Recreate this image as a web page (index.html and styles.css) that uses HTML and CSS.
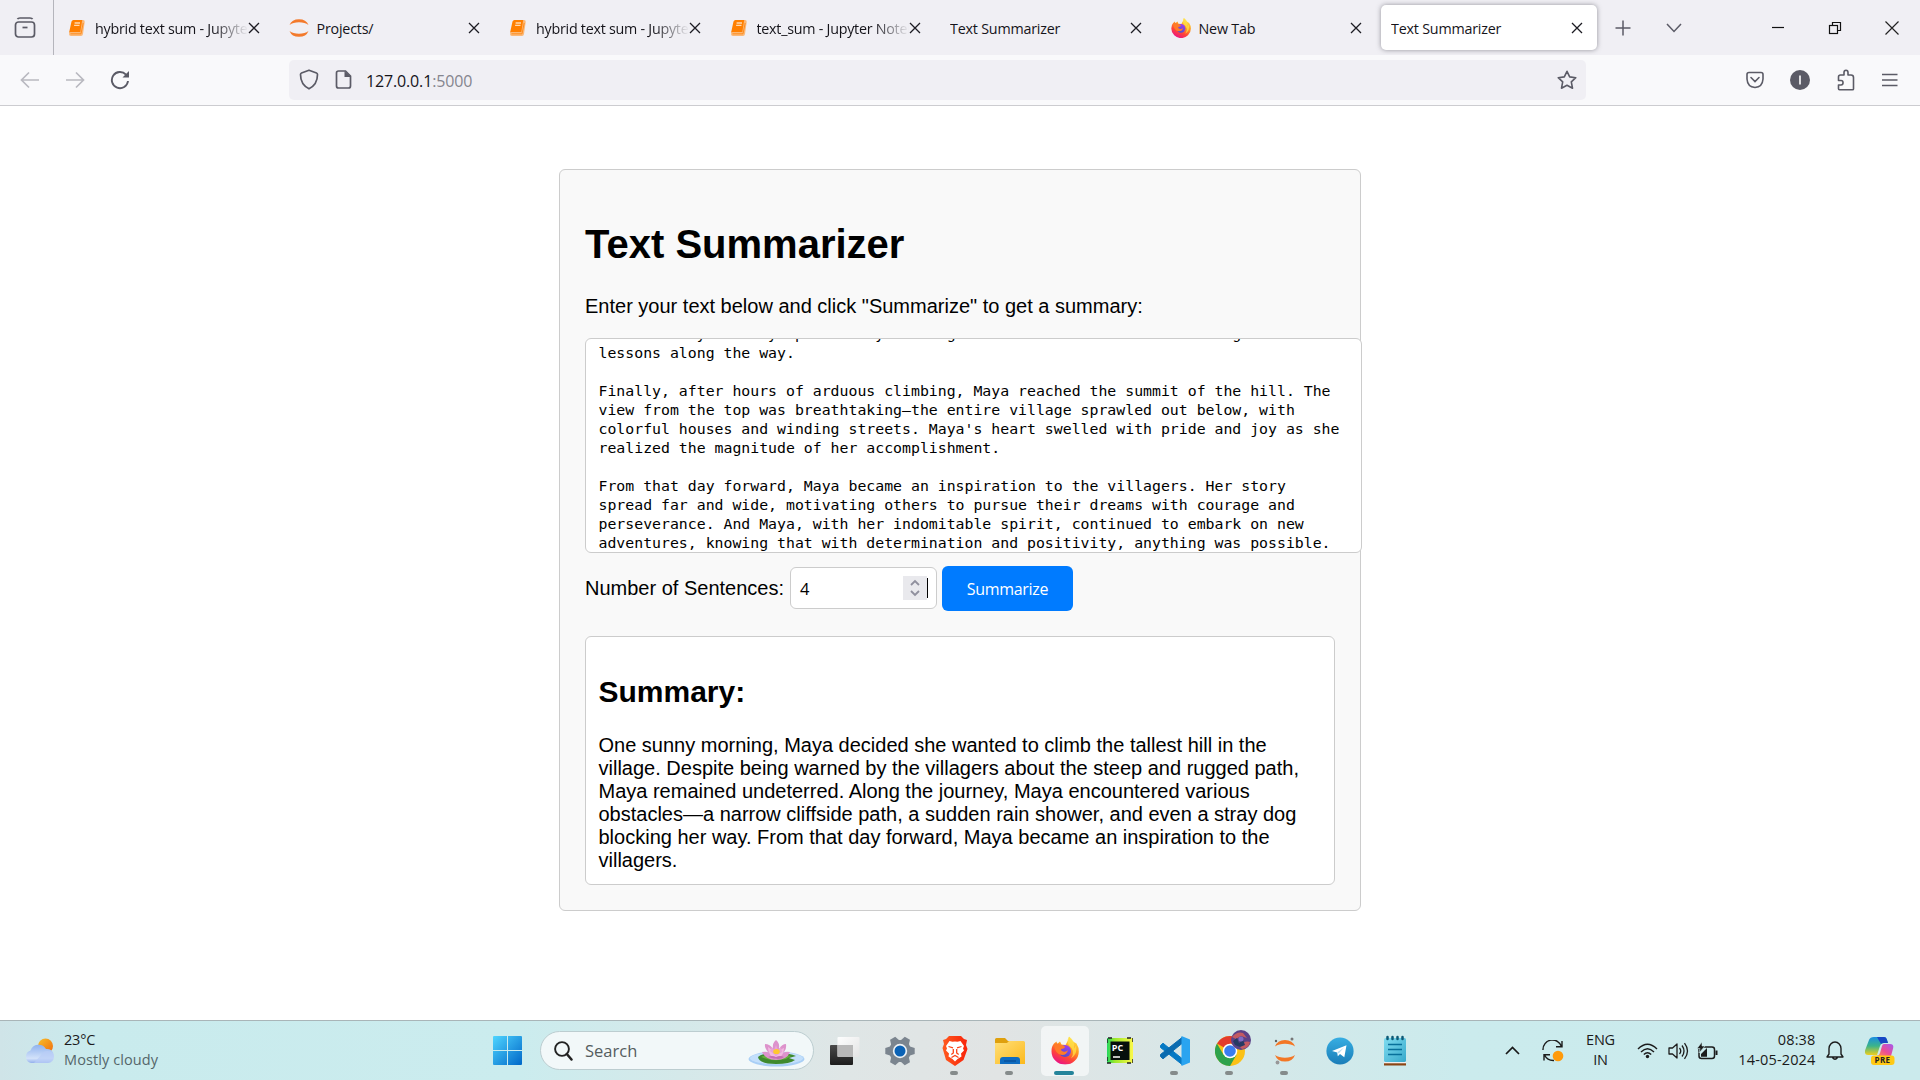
FILE: index.html
```html
<!DOCTYPE html>
<html lang="en">
<head>
<meta charset="utf-8">
<title>Text Summarizer</title>
<link rel="stylesheet" href="styles.css">
</head>
<body>
<svg class="defs" width="0" height="0">
  <defs>
    <linearGradient id="ffBody" x1=".8" y1="0" x2=".3" y2="1"><stop offset="0" stop-color="#fff14a"/><stop offset=".4" stop-color="#ff9a20"/><stop offset=".7" stop-color="#ff4438"/><stop offset="1" stop-color="#e8108a"/></linearGradient>
    <linearGradient id="ffGlobe" x1=".7" y1="0" x2=".3" y2="1"><stop offset="0" stop-color="#a03df0"/><stop offset="1" stop-color="#4b50c8"/></linearGradient>
    <linearGradient id="win" x1="0" y1="0" x2="1" y2="1"><stop offset="0" stop-color="#4fd5ff"/><stop offset="1" stop-color="#0067c8"/></linearGradient>
    <linearGradient id="cloud" x1="0" y1="0" x2="0" y2="1"><stop offset="0" stop-color="#8fb2ee"/><stop offset=".75" stop-color="#d3e2fa"/><stop offset="1" stop-color="#93b0ec"/></linearGradient>
    <linearGradient id="sun" x1="0" y1="0" x2="1" y2="1"><stop offset="0" stop-color="#f8c02a"/><stop offset="1" stop-color="#f0690e"/></linearGradient>
    <linearGradient id="brave" x1="0" y1="0" x2="1" y2="0"><stop offset="0" stop-color="#ff5a1f"/><stop offset="1" stop-color="#f8230a"/></linearGradient>
    <linearGradient id="folder" x1="0" y1="0" x2="1" y2="1"><stop offset="0" stop-color="#ffdf78"/><stop offset="1" stop-color="#fcb91c"/></linearGradient>
    <linearGradient id="pc" x1="0" y1="0" x2="1" y2="0"><stop offset="0" stop-color="#21d760"/><stop offset=".3" stop-color="#9be82c"/><stop offset="1" stop-color="#fcf84a"/></linearGradient>
    <linearGradient id="tg" x1="0" y1="0" x2="0" y2="1"><stop offset="0" stop-color="#37aee2"/><stop offset="1" stop-color="#1a7db8"/></linearGradient>
    <linearGradient id="note" x1="0" y1="0" x2="1" y2="1"><stop offset="0" stop-color="#7fdcf0"/><stop offset="1" stop-color="#37a9cb"/></linearGradient>
    <linearGradient id="copA" x1="0" y1="0" x2="0" y2="1"><stop offset="0" stop-color="#1a8ee0"/><stop offset=".5" stop-color="#3bb48a"/><stop offset="1" stop-color="#f0cf1c"/></linearGradient>
    <linearGradient id="copB" x1="1" y1="0" x2="0" y2="1"><stop offset="0" stop-color="#a45af0"/><stop offset=".55" stop-color="#ea4c96"/><stop offset="1" stop-color="#ff8a50"/></linearGradient>
    <linearGradient id="tvBack" x1="0" y1="0" x2="0" y2="1"><stop offset="0" stop-color="#4a4a4a"/><stop offset="1" stop-color="#1c1c1c"/></linearGradient>
    <linearGradient id="tvFront" x1="0" y1="0" x2="1" y2="1"><stop offset="0" stop-color="#fff"/><stop offset="1" stop-color="#e4e4e4"/></linearGradient>
    <symbol id="x" viewBox="0 0 12 12"><path d="M1 1l10 10M11 1L1 11" fill="none" stroke="#1c1b22" stroke-width="1.3"/></symbol>
    <symbol id="book" viewBox="0 0 18 18"><path d="M5.500 1H15q2 0 1.700 2L15 15q-.3 2-2 2H3q-2 0-2-2z" fill="#fbb877"/><path d="M5.500 1H14.200L12.300 13H2.500q-1 0-1.500 1L3.500 2.500Q4 1 5.500 1z" fill="#ff7f00"/><path d="M6.600 4h5.400M6.100 6.400h5.400" stroke="#ffd9b0" stroke-width="1.300"/><path d="M2.500 14.800h10.500L15.200 4" fill="none" stroke="#ff8d1e" stroke-width="1"/></symbol>
    <symbol id="jup" viewBox="0 0 20 20"><path d="M.5 7A10 8.500 0 0 1 19.500 7A12 7 0 0 0 .5 7zM.5 13A10 8.500 0 0 0 19.500 13A12 7 0 0 1 .5 13z" fill="#f37a2c"/></symbol>
    <symbol id="fox" viewBox="0 0 28 28"><path d="M3 7L5.500 5l.7 2.500L9 5l1.500 3 4 .5L17.500 3 18 0l4 5 3.500 2q2.500 4 2.300 8A13.500 13 0 0 1 .5 15Q.3 10 3 7z" fill="url(#ffBody)"/><circle cx="14" cy="14.500" r="6" fill="url(#ffGlobe)"/><path d="M3 8q3-2 7 .5l4 1.500q0 2-4 2.500 0 2 2 2.500 3 1 5-1.500-1 5-6 5Q4 18 3 8z" fill="#ff7a28"/><path d="M18 0q7 5 5 12l2-3q2 8-5 13 5-8-2-13-3-4 0-9z" fill="#ffe14a" opacity=".75"/></symbol>
  </defs>
</svg>

<div class="screen">
  <header class="tabbar">
    <div class="view"><svg width="22" height="22" viewBox="0 0 22 22" fill="none" stroke="#5b5b66" stroke-width="1.700"><path d="M3.500 2.200Q4 1 6 1h10q2 0 2.500 1.200"/><rect x="1.500" y="5" width="19" height="15" rx="3"/><path d="M8.500 10.500h5"/></svg></div>
    <div class="tabs">
      <div class="tab"><svg class="fav"><use href="#book"/></svg><span class="fade">hybrid text sum - Jupyter</span><svg class="tx"><use href="#x"/></svg></div>
      <div class="tab"><svg class="fav jp"><use href="#jup"/></svg><span>Projects/</span><svg class="tx"><use href="#x"/></svg></div>
      <div class="tab"><svg class="fav"><use href="#book"/></svg><span class="fade">hybrid text sum - Jupyter</span><svg class="tx"><use href="#x"/></svg></div>
      <div class="tab"><svg class="fav"><use href="#book"/></svg><span class="fade">text_sum - Jupyter Notebook</span><svg class="tx"><use href="#x"/></svg></div>
      <div class="tab"><span>Text Summarizer</span><svg class="tx"><use href="#x"/></svg></div>
      <div class="tab"><svg class="fav jp"><use href="#fox"/></svg><span>New Tab</span><svg class="tx"><use href="#x"/></svg></div>
      <div class="tab active"><span>Text Summarizer</span><svg class="tx"><use href="#x"/></svg></div>
    </div>
    <div class="newtab"><svg width="16" height="16" viewBox="0 0 16 16" stroke="#5b5b66" stroke-width="1.500"><path d="M8 .5v15M.5 8h15"/></svg></div>
    <div class="alltabs"><svg width="16" height="10" viewBox="0 0 16 10" fill="none" stroke="#5b5b66" stroke-width="1.500"><path d="M1 1l7 7.500L15 1"/></svg></div>
    <div class="wincell"><svg width="14" height="14" viewBox="0 0 14 14" stroke="#111" stroke-width="1.200"><path d="M1 6.500h12"/></svg></div>
    <div class="wincell"><svg width="14" height="14" viewBox="0 0 14 14" fill="none" stroke="#111" stroke-width="1.200"><rect x="1.500" y="4.500" width="8" height="8"/><path d="M4.500 4V1.500h8v8H10"/></svg></div>
    <div class="wincell"><svg width="14" height="14" viewBox="0 0 14 14" stroke="#222" stroke-width="1.200"><path d="M.5.5l13 13M13.500.5l-13 13"/></svg></div>
  </header>

  <nav class="toolbar">
    <div class="navcell"><svg width="20" height="18" viewBox="0 0 20 18" fill="none" stroke="#b9b9c0" stroke-width="1.700"><path d="M19 9H2M9 1.500L1.500 9 9 16.500"/></svg></div>
    <div class="navcell"><svg width="20" height="18" viewBox="0 0 20 18" fill="none" stroke="#b9b9c0" stroke-width="1.700"><path d="M1 9h17M11 1.500L18.500 9 11 16.500"/></svg></div>
    <div class="navcell"><svg width="20" height="20" viewBox="0 0 20 20"><path d="M16 4.700A8.100 8.100 0 1 0 18 11" fill="none" stroke="#5b5b66" stroke-width="1.900"/><path d="M19 1v6.500h-6.500z" fill="#5b5b66"/></svg></div>
    <div class="urlbar">
      <svg class="shield" width="20" height="21" viewBox="0 0 20 21" fill="none" stroke="#5b5b66" stroke-width="1.700" stroke-linejoin="round"><path d="M10 1.200L17.500 4q1 .4 1 1.500 0 10-8.500 14.300Q1.500 15.500 1.500 5.500q0-1.100 1-1.500z"/></svg>
      <svg class="page" width="17" height="19" viewBox="0 0 17 19"><path d="M3.500 1h7l5 5v10q0 2-2 2h-10q-2 0-2-2V3q0-2 2-2z" fill="none" stroke="#5b5b66" stroke-width="1.700"/><path d="M9.500 1v6h6.500z" fill="#5b5b66"/></svg>
      <span class="url">127.0.0.1<i>:5000</i></span>
      <svg class="star" width="20" height="20" viewBox="0 0 20 20" fill="none" stroke="#5b5b66" stroke-width="1.600" stroke-linejoin="round"><path d="M10 1.300l2.700 5.600 6.100.8-4.500 4.200 1.200 6.300L10 15.300l-5.500 2.900 1.200-6.300L1.200 7.700l6.100-.8z"/></svg>
    </div>
    <div class="tools">
      <svg width="18" height="18" viewBox="0 0 18 18" fill="none" stroke="#5b5b66" stroke-width="1.600" stroke-linecap="round"><path d="M3 1.500h12q2 0 2 2V8Q16.500 16 9 16.500 1.500 16 1 8V3.500q0-2 2-2z"/><path d="M5 6.500l4 4 4-4"/></svg>
      <svg width="20" height="20" viewBox="0 0 20 20"><circle cx="10" cy="10" r="10" fill="#5b5b66"/><path d="M10 5.500v9" stroke="#fff" stroke-width="1.600"/></svg>
      <svg width="20" height="22" viewBox="0 0 20 22" fill="none" stroke="#5b5b66" stroke-width="1.600" stroke-linejoin="round"><path d="M2.500 9V8q0-2 2-2H8V3.500a2 2.300 0 0 1 4 0V6h3q2.500 0 2.500 2.500V20q0 .8-1 .8H3.500q-1 0-1-1V16H5a2 2.200 0 0 0 0-4.500H2.500z"/></svg>
      <svg width="16" height="14" viewBox="0 0 16 14" stroke="#5b5b66" stroke-width="1.500"><path d="M0 1.500h15.500M0 7h15.500M0 12.500h15.500"/></svg>
    </div>
  </nav>

  <main class="viewport">
    <section class="container">
      <h1>Text Summarizer</h1>
      <p class="intro">Enter your text below and click "Summarize" to get a summary:</p>
      <div class="textarea"><pre>But in every one Maya pressed by drawing on her inner resolve and taking vital
lessons along the way.

Finally, after hours of arduous climbing, Maya reached the summit of the hill. The
view from the top was breathtaking—the entire village sprawled out below, with
colorful houses and winding streets. Maya's heart swelled with pride and joy as she
realized the magnitude of her accomplishment.

From that day forward, Maya became an inspiration to the villagers. Her story
spread far and wide, motivating others to pursue their dreams with courage and
perseverance. And Maya, with her indomitable spirit, continued to embark on new
adventures, knowing that with determination and positivity, anything was possible.</pre></div>
      <div class="form">
        <label>Number of Sentences:</label>
        <div class="number"><span>4</span><svg width="24" height="24" viewBox="0 0 24 24"><path d="M0 0h24v24H0z" fill="#e9e9ed"/><path d="M8 9l4-4 4 4M8 15l4 4 4-4" fill="none" stroke="#8f8f9d" stroke-width="1.800"/></svg><b></b></div>
        <button>Summarize</button>
      </div>
      <div class="summary">
        <h2>Summary:</h2>
        <p>One sunny morning, Maya decided she wanted to climb the tallest hill in the<br>village. Despite being warned by the villagers about the steep and rugged path,<br>Maya remained undeterred. Along the journey, Maya encountered various<br>obstacles—a narrow cliffside path, a sudden rain shower, and even a stray dog<br>blocking her way. From that day forward, Maya became an inspiration to the<br>villagers.</p>
      </div>
    </section>
  </main>

  <footer class="taskbar">
    <div class="weather">
      <svg width="31" height="26" viewBox="0 0 31 26"><circle cx="21.500" cy="8" r="7.500" fill="url(#sun)"/><path d="M7 25a6.500 6.500 0 0 1-.5-12.500A8.500 8.500 0 0 1 22 11a7 7 0 0 1 2 14z" fill="url(#cloud)"/><path d="M17 17a7 7 0 0 1 13 1q0 6.500-6 7H10z" fill="#b9cdf6" opacity=".7"/></svg>
      <div class="wtext"><span>23°C</span><span class="dim">Mostly cloudy</span></div>
    </div>
    <div class="start"><svg width="29" height="29" viewBox="0 0 29 29"><path d="M1 0h13v14H0V1q0-1 1-1zM15 0h13q1 0 1 1v13H15zM0 15h14v14H1q-1 0-1-1zM15 15h14v13q0 1-1 1H15z" fill="url(#win)"/></svg></div>
    <div class="search">
      <svg width="19" height="20" viewBox="0 0 19 20" fill="none" stroke="#222"><circle cx="8" cy="8" r="6.900" stroke-width="1.900"/><path d="M12.800 13l4.700 5.500" stroke-width="2.500" stroke-linecap="round"/></svg>
      <span>Search</span>
      <svg class="lotus" width="57" height="28" viewBox="0 0 57 28"><ellipse cx="28.500" cy="20" rx="28" ry="7.500" fill="#a9cff6"/><ellipse cx="28.500" cy="19.300" rx="26.500" ry="6" fill="#c3dffb"/><path d="M10 18q4-4 18-4t20 3l-7 2 6 2q-5 4-19 4-17 0-18-7z" fill="#3f8a2e"/><path d="M13 18q6-3 15-3t15 2l-5 3q-13 3-25-2z" fill="#62ae3b"/><path d="M28 21Q18 21 14 13q5-1 7 1-5-5-4-9 5 0 8 5-1-6 3-9 4 3 3 9 3-5 7-5 1 5-3 9 3-2 7-1-3 8-14 8z" fill="#dd93cc"/><path d="M28 20Q20 17 20 8q5 3 8 9 3-7 8-8 0 9-8 11z" fill="#f2b9e1"/><path d="M22 12l2-4 2 3 2-5 2 5 3-3 1 5-6 4z" fill="#e7a4d6"/><path d="M20 18q4-2 8 0 4-2 8 0-4 4-16 0z" fill="#c56eb4"/><ellipse cx="28.500" cy="12.500" rx="3.300" ry="2.600" fill="#ffc82e"/></svg>
    </div>
    <div class="apps">
      <div class="app"><svg width="30" height="29" viewBox="0 0 30 29"><rect y="9" width="23" height="20" rx="1" fill="url(#tvBack)"/><rect x="7.500" y="1" width="22" height="20" rx="1" fill="url(#tvFront)" opacity=".95"/><path d="M7.500 9H23v12H8.500q-1 0-1-1z" fill="#b8b8b8"/></svg></div>
      <div class="app"><svg width="30" height="30" viewBox="-15 -15 30 30"><g fill="#7b858f" transform="rotate(30)"><circle r="11"/><path id="tooth" d="M-4.500-10L-3-14.700h6L4.500-10v20L3 14.700h-6L-4.500 10z"/><use href="#tooth" transform="rotate(60)"/><use href="#tooth" transform="rotate(120)"/></g><circle r="7.200" fill="#eef2f5"/><circle r="5.500" fill="#0b62b5"/></svg></div>
      <div class="app run"><svg width="26" height="30" viewBox="0 0 26 30"><path d="M7 0h12l3 3 3 1-1 5 1.500 4-4 11L13 30 4 24 .5 12 2 8 1 4l3-1z" fill="url(#brave)"/><path d="M7.500 5l3 .8L13 5.500l2.500.3 3-.8 3.500 5-1 2.500 1 2-3 3 .5 3-4 2.500L13 25.500 10.500 23l-4-2.500.5-3-3-3 1-2-1-2.500z" fill="#fff"/><path d="M6.500 10.500l4.500 1.300M19.500 10.500L15 11.800M11.300 13v4l-2 1.500M14.700 13v4l2 1.500M9.500 21.500L13 19.500l3.500 2" fill="none" stroke="#fb4418" stroke-width="1.300"/></svg></div>
      <div class="app run"><svg width="30" height="28" viewBox="0 0 30 28"><path d="M1.500 1H10l3 3h15v6H0V2.500Q0 1 1.500 1z" fill="#dfa00d"/><path d="M0 6h12l2-2h14.500Q30 4 30 5.500V27H0z" fill="url(#folder)"/><path d="M5 27v-4q0-3 3-3h14q3 0 3 3v4z" fill="#0f6cc0"/><path d="M9 24h12" stroke="#084c94" stroke-width="1.200"/></svg></div>
      <div class="app current"><svg width="28" height="29" viewBox="0 0 28 28"><use href="#fox"/></svg></div>
      <div class="app"><svg width="26" height="27" viewBox="0 0 26 27"><path d="M0 1h26v25H0z" fill="url(#pc)"/><path d="M0 6V1h5M20 1h6v4M26 22v4h-8M4 26H0v-8" fill="none" stroke="#222" stroke-width="1.500" stroke-dasharray="4 2"/><path d="M3.500 4.500h19v18.500h-19z" fill="#06100c"/><text x="4.800" y="14" class="pctext">PC</text><path d="M6 20h7" stroke="#fff" stroke-width="1.500"/></svg></div>
      <div class="app run"><svg width="30" height="30" viewBox="0 0 30 30"><path d="M.5 9.500L3 7.200 22 22.500v6L.5 11.500z" fill="#0679c4" stroke="#0679c4" stroke-linejoin="round"/><path d="M.5 20.500L3 22.800 22 7.500v-6L.5 18.500z" fill="#0a6bb0" stroke="#0a6bb0" stroke-linejoin="round"/><path d="M21.500 0L30 3.500v23L21.500 30z" fill="#2aa4f0"/></svg></div>
      <div class="app run chrome"><svg width="36" height="36" viewBox="0 0 36 36"><circle cx="15" cy="21" r="15" fill="#fbc116"/><path d="M15 21L2 13.500A15 15 0 0 1 28 13.500H15z" fill="#e33b2e"/><path d="M2 13.500A15 15 0 0 0 15 36l6.500-11.300L15 21 8.500 24.700z" fill="#2da24c"/><circle cx="15" cy="21" r="7.300" fill="#fff"/><circle cx="15" cy="21" r="5.800" fill="#3a7df0"/><circle cx="26" cy="10" r="10" fill="#5b4287"/><path d="M17 7q5-6 11-4l4 5-6-2-5 3zM24 16q6-6 11-4-1 6-8 7z" fill="#c35a62"/><path d="M18 11l4-3 2 5 4-3 2 5-5 2-5-2z" fill="#263a63"/><circle cx="26" cy="9" r="2.500" fill="#806cc5"/></svg></div>
      <div class="app run"><svg width="22" height="28" viewBox="0 0 22 28"><path d="M1 9.500A10.500 9.500 0 0 1 21 9.500A13 7.500 0 0 0 1 9.500zM1 18A10.500 9.500 0 0 0 21 18A13 7.500 0 0 1 1 18z" fill="#f37726"/><circle cx="2" cy="4" r="1.200" fill="#616262"/><circle cx="18" cy="2" r="1.500" fill="#767677"/><circle cx="3.500" cy="25.500" r="1.900" fill="#989798"/></svg></div>
      <div class="app"><svg width="28" height="28" viewBox="0 0 28 28"><circle cx="14" cy="14" r="13.600" fill="url(#tg)"/><path d="M6 14L20.500 8.200 18.300 20.300 14 17l-2.200 2.200-.6-3.700z" fill="#fff"/><path d="M11.300 15.300L18 10.500l-5.300 6z" fill="#b8dcf0"/></svg></div>
      <div class="app"><svg width="24" height="31" viewBox="0 0 24 31"><path d="M1 28h22v2.500H1z" fill="#8b4513"/><path d="M1 26h22v2.300H1z" fill="#eee"/><rect x="1" y="3" width="22" height="24" rx="1.500" fill="url(#note)"/><path d="M5 9.500h14M5 14.500h14M5 19.500h14" stroke="#08709a" stroke-width="1.700"/><path d="M4.500 2v2M9.500 2v2M14.500 2v2M19.500 2v2" stroke="#0d5976" stroke-width="2.500" stroke-linecap="round"/></svg></div>
    </div>
    <div class="tray">
      <div class="c40"><svg width="15" height="9" viewBox="0 0 15 9" fill="none" stroke="#181818" stroke-width="1.700"><path d="M1 8l6.500-6.500L14 8"/></svg></div>
      <div class="c40"><svg width="22" height="22" viewBox="0 0 22 22" fill="none" stroke="#1c1c1c" stroke-width="1.400"><path d="M1 10A9.500 9.500 0 0 1 19.500 6.500M20 1v5.800h-6M12 20.500A10 10 0 0 1 2.500 15M2 20.500V14.700h6"/><circle cx="16" cy="16" r="5.300" fill="#ff9a0c" stroke="none"/></svg></div>
      <div class="lang"><span>ENG</span><span>IN</span></div>
      <div class="c38"><svg width="21" height="16" viewBox="0 0 21 16" fill="none" stroke="#1c1c1c" stroke-width="1.400"><path d="M1 6q9.500-9.500 19 0M4 9q6.500-6.500 13 0M6.800 11.500q3.700-3.500 7.400 0"/><circle cx="10.500" cy="13.500" r="1.700" fill="#1c1c1c" stroke="none"/></svg></div>
      <div class="c23"><svg width="21" height="18" viewBox="0 0 21 18" fill="none" stroke="#1c1c1c" stroke-width="1.300" stroke-linejoin="round"><path d="M1 6h3.500L9 2v14l-4.500-4H1zM11.500 6q2.500 3 0 6M14 3.500q4 5.500 0 11M16.500 1.200q6 7.800 0 15.600"/></svg></div>
      <div class="c36"><svg width="21" height="18" viewBox="0 0 21 18"><rect x="2" y="5" width="15.500" height="11.500" rx="2.500" fill="none" stroke="#1c1c1c" stroke-width="1.500"/><path d="M18.500 8.500h2v4.500h-2zM4 14.700V12l6-6v8.700z" fill="#1c1c1c"/><path d="M5 0L0 6.500h3L2 11l6-7H5z" fill="#1c1c1c" stroke="#cdebed" stroke-width=".6"/></svg></div>
      <div class="clock"><span>08:38</span><span>14-05-2024</span></div>
      <div class="c38"><svg width="18" height="20" viewBox="0 0 18 20" fill="none" stroke="#1c1c1c" stroke-width="1.400" stroke-linejoin="round"><path d="M3 13V7.500a6 6.500 0 0 1 12 0V13l2 3H1zM6.500 16.500q2.500 3.500 5 0"/></svg></div>
      <div class="c52"><svg width="30" height="30" viewBox="0 0 30 30"><path d="M9 1h10q2 0 2.700 2L23 7h-4q-3 0-4 3l-3 9H3q-4 0-2.800-5L4 4q1-3 5-3z" fill="url(#copA)"/><path d="M12 1h7q2 0 2.700 2L23 7h-4q-2 0-3 1z" fill="#1747c4"/><path d="M19 8h6q4 0 3.200 4L26 20H12q2 0 3-3l2-7q.5-2 2-2z" fill="url(#copB)"/><rect x="6" y="19.500" width="23.500" height="9.500" rx="3" fill="#ffc914"/><text x="9.500" y="27.200" class="pre">PRE</text></svg></div>
    </div>
  </footer>
</div>
</body>
</html>
```
FILE: styles.css
```css
* { box-sizing: border-box; }
body { margin: 0; font-family: "Liberation Sans", Arial, sans-serif; font-size: 20px; line-height: 23px; color: #000; background: #fff; }
svg { display: block; flex: none; }
.defs { position: absolute; }
.screen { width: 1920px; height: 1080px; display: flex; flex-direction: column; overflow: hidden; }
.tabbar, .toolbar, .taskbar { font-family: "Open Sans", "Noto Sans", sans-serif; white-space: nowrap; }

.tabbar { height: 55px; flex: none; display: flex; align-items: center; background: #f0eff4; }
.view { width: 54px; height: 55px; flex: none; padding-right: 3px; border-right: 1px solid #b5b5bc; display: flex; align-items: center; justify-content: center; }
.tabs { display: flex; gap: 4.5px; margin-left: 4px; }
.tab { width: 216px; height: 45px; padding: 0 14.5px 0 10px; display: flex; align-items: center; font-size: 14.3px; letter-spacing: -.2px; color: #15141a; border-radius: 5px; }
.tab span { flex: 1; min-width: 0; overflow: hidden; padding-top: 2px; }
.tab .fade { letter-spacing: -.25px; -webkit-mask-image: linear-gradient(90deg, #000 77%, transparent); mask-image: linear-gradient(90deg, #000 77%, transparent); }
.active { background: #fff; box-shadow: 0 0 5px rgba(70, 70, 80, .55); }
.fav { width: 18px; height: 18px; margin: 0 9px 0 0; }
.fav.jp { width: 20px; height: 20px; margin: 0 8px 0 0; }
.tx { width: 12px; height: 12px; }
.newtab, .alltabs { width: 51px; flex: none; display: flex; justify-content: center; }
.wincell { width: 57px; display: flex; justify-content: center; }
.alltabs { margin-right: 50px; }

.toolbar { height: 51px; flex: none; display: flex; align-items: center; padding: 0 22px 1px 7px; background: #f9f9fb; border-bottom: 1px solid #ccccd0; }
.navcell { width: 45px; display: flex; justify-content: center; }
.urlbar { margin-left: 147px; width: 1297px; height: 40px; padding: 0 9px 0 10px; border-radius: 5px; background: #f0eff4; display: flex; align-items: center; }
.page { margin-left: 16px; }
.url { margin-left: 14px; padding-top: 4px; flex: 1; font-size: 16px; letter-spacing: -.15px; color: #15141a; }
.url i { font-style: normal; color: #85858e; }
.tools { margin-left: 160px; flex: 1; display: flex; align-items: center; justify-content: space-between; }

.viewport { flex: 1; padding-top: 63px; }
.container { width: 802px; height: 742px; margin: 0 auto; padding: 25px; border: 1px solid #ccc; border-radius: 6px; background: #f9f9f9; }
h1 { margin: 26px 0 28px; font-size: 40px; line-height: 46px; }
.intro { margin: 0 0 20px; }
.textarea { width: 777px; height: 215px; padding: 0 12.5px; border: 1px solid #ccc; border-radius: 6px; background: #fff; overflow: hidden; display: flex; flex-direction: column; justify-content: flex-end; }
pre { margin: 0; font: 14.84px/19px "DejaVu Sans Mono", monospace; }
.form { display: flex; align-items: flex-start; margin-top: 13px; }
label { width: 205px; padding-top: 11px; white-space: nowrap; }
.number { width: 147px; height: 42px; margin: 1px 5px 0 0; padding: 0 8px 0 9px; border: 1px solid #ccc; border-radius: 6px; background: #fff; display: flex; align-items: center; font-family: "Open Sans", sans-serif; font-size: 16.5px; }
.number span { flex: 1; padding-top: 1px; }
.number b { width: 1px; height: 20px; background: #000; }
button { width: 131px; height: 45px; padding: 0; border: 0; border-radius: 6px; background: #007bff; color: #fff; font: 16px "Open Sans", sans-serif; letter-spacing: -.3px; }
.summary { width: 750px; height: 249px; margin-top: 25px; padding: 12.5px; border: 1px solid #ccc; border-radius: 6px; background: #fff; }
h2 { margin: 24px 0 25px; font-size: 30px; line-height: 35px; }
.summary p { margin: 0; white-space: nowrap; }

.taskbar { height: 60px; flex: none; display: flex; align-items: center; border-top: 1px solid #a9b5b8; background: linear-gradient(90deg, #cfe4e8 0, #c9ebed 5%, #cbecee 27%, #dfe6e6 44%, #e1e4e4 52%, #d4e8e9 66%, #cbebed 76%, #cbeaec 100%); color: #1b1b1b; }
.weather { width: 493px; padding-left: 24px; display: flex; align-items: center; gap: 9px; }
.wtext, .lang, .clock { display: flex; flex-direction: column; font-size: 14.5px; line-height: 20px; letter-spacing: -.2px; padding-bottom: 2px; }
.dim { color: #55666a; letter-spacing: .1px; }
.start { width: 47px; }
.search { width: 274px; height: 39px; padding: 0 8px 0 13px; border: 1px solid #bccdd0; border-radius: 20px; background: #f2f8f9; display: flex; align-items: center; font-size: 16.5px; color: #555d60; }
.search span { flex: 1; margin-left: 12px; }
.lotus { margin-top: 4px; }
.apps { display: flex; margin-left: 3px; }
.app { position: relative; width: 55px; height: 50px; display: flex; align-items: center; justify-content: center; }
.run::after, .current::after { content: ""; position: absolute; left: 23px; bottom: 1px; width: 8px; height: 4px; border-radius: 2px; background: #858b8b; }
.current::before { content: ""; position: absolute; inset: 0 3.5px; border-radius: 5px; background: rgba(255, 255, 255, .6); z-index: -1; }
.current { z-index: 0; }
.current::after { left: 17px; width: 20px; background: #25849a; }
.chrome svg { margin: -6px 0 0 6px; }
.pctext { font: bold 9px "Open Sans", sans-serif; fill: #fff; }
.tray { display: flex; align-items: center; margin-left: 70.500px; }
.tray > div { flex: none; }
.c40, .c38, .c23, .c36, .c52 { display: flex; justify-content: center; }
.c40 { width: 40px; }
.c38 { width: 38px; }
.c23 { width: 23px; }
.c36 { width: 36px; }
.c52 { width: 52px; }
.lang { width: 56px; align-items: center; }
.clock { width: 90px; align-items: flex-end; letter-spacing: .15px; }
.pre { font: bold 8px "Open Sans", sans-serif; letter-spacing: .4px; fill: #222; }
```
